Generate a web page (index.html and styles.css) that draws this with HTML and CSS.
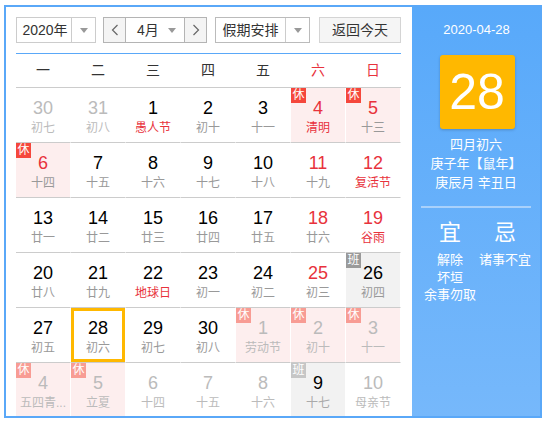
FILE: index.html
```html
<!DOCTYPE html>
<html lang="zh">
<head>
<meta charset="utf-8">
<title>万年历</title>
<link rel="stylesheet" href="styles.css">
</head>
<body>
<div class="cal">
  <div class="main">
    <div class="bar">
      <div class="sel sel-year"><span class="sel-text">2020年</span><span class="sel-arrow"><i class="tri"></i></span></div>
      <div class="month-group">
        <span class="nav"><svg width="8" height="12" viewBox="0 0 8 12"><polyline points="6.5,1 1.5,6 6.5,11" fill="none" stroke="#666" stroke-width="1.2"/></svg></span>
        <span class="month"><span class="month-text">4月</span><i class="tri"></i></span>
        <span class="nav"><svg width="8" height="12" viewBox="0 0 8 12"><polyline points="1.5,1 6.5,6 1.5,11" fill="none" stroke="#666" stroke-width="1.2"/></svg></span>
      </div>
      <div class="sel sel-hol"><span class="sel-text">假期安排</span><span class="sel-arrow"><i class="tri"></i></span></div>
      <div class="btn-today">返回今天</div>
    </div>
    <div class="weeks">
      <span>一</span><span>二</span><span>三</span><span>四</span><span>五</span><span class="red">六</span><span class="red">日</span>
    </div>
    <div class="grid">
      <div class="cell other"><b>30</b><em>初七</em></div>
      <div class="cell other"><b>31</b><em>初八</em></div>
      <div class="cell"><b>1</b><em class="red">愚人节</em></div>
      <div class="cell"><b>2</b><em>初十</em></div>
      <div class="cell"><b>3</b><em>十一</em></div>
      <div class="cell rest"><i class="tag">休</i><b class="red">4</b><em class="red">清明</em></div>
      <div class="cell rest"><i class="tag">休</i><b class="red">5</b><em>十三</em></div>

      <div class="cell rest"><i class="tag">休</i><b class="red">6</b><em>十四</em></div>
      <div class="cell"><b>7</b><em>十五</em></div>
      <div class="cell"><b>8</b><em>十六</em></div>
      <div class="cell"><b>9</b><em>十七</em></div>
      <div class="cell"><b>10</b><em>十八</em></div>
      <div class="cell"><b class="red">11</b><em>十九</em></div>
      <div class="cell"><b class="red">12</b><em class="red">复活节</em></div>

      <div class="cell"><b>13</b><em>廿一</em></div>
      <div class="cell"><b>14</b><em>廿二</em></div>
      <div class="cell"><b>15</b><em>廿三</em></div>
      <div class="cell"><b>16</b><em>廿四</em></div>
      <div class="cell"><b>17</b><em>廿五</em></div>
      <div class="cell"><b class="red">18</b><em>廿六</em></div>
      <div class="cell"><b class="red">19</b><em class="red">谷雨</em></div>

      <div class="cell"><b>20</b><em>廿八</em></div>
      <div class="cell"><b>21</b><em>廿九</em></div>
      <div class="cell"><b>22</b><em class="red">地球日</em></div>
      <div class="cell"><b>23</b><em>初一</em></div>
      <div class="cell"><b>24</b><em>初二</em></div>
      <div class="cell"><b class="red">25</b><em>初三</em></div>
      <div class="cell work"><i class="tag">班</i><b>26</b><em>初四</em></div>

      <div class="cell"><b>27</b><em>初五</em></div>
      <div class="cell today"><b>28</b><em>初六</em></div>
      <div class="cell"><b>29</b><em>初七</em></div>
      <div class="cell"><b>30</b><em>初八</em></div>
      <div class="cell other rest"><i class="tag">休</i><b>1</b><em>劳动节</em></div>
      <div class="cell other rest"><i class="tag">休</i><b>2</b><em>初十</em></div>
      <div class="cell other rest"><i class="tag">休</i><b>3</b><em>十一</em></div>

      <div class="cell other rest"><i class="tag">休</i><b>4</b><em class="short">五四青...</em></div>
      <div class="cell other rest"><i class="tag">休</i><b>5</b><em>立夏</em></div>
      <div class="cell other"><b>6</b><em>十四</em></div>
      <div class="cell other"><b>7</b><em>十五</em></div>
      <div class="cell other"><b>8</b><em>十六</em></div>
      <div class="cell other work"><i class="tag">班</i><b class="dark">9</b><em>十七</em></div>
      <div class="cell other"><b>10</b><em>母亲节</em></div>
    </div>
  </div>
  <div class="side">
    <div class="side-date">2020-04-28</div>
    <div class="big-day">28</div>
    <div class="lunar">
      <div>四月初六</div>
      <div>庚子年【鼠年】</div>
      <div>庚辰月 辛丑日</div>
    </div>
    <div class="divider"></div>
    <div class="yiji">
      <div class="col">
        <div class="yj-title">宜</div>
        <div class="yj-item">解除</div>
        <div class="yj-item">坏垣</div>
        <div class="yj-item">余事勿取</div>
      </div>
      <div class="col">
        <div class="yj-title">忌</div>
        <div class="yj-item">诸事不宜</div>
      </div>
    </div>
  </div>
</div>
</body>
</html>
```
FILE: styles.css
```css
* { box-sizing: border-box; }
html, body { margin: 0; padding: 0; background: #fff; }
body {
  font-family: "Liberation Sans", "Noto Sans CJK SC", sans-serif;
  color: #333;
}
.cal {
  margin: 5px 0 0 4px;
  width: 538px;
  height: 413px;
  border: 2px solid #5aa8f8;
  display: flex;
  overflow: hidden;
}
.main {
  width: 406px;
  padding: 10px 0 0 10px;
  background: #fff;
  overflow: hidden;
}
.bar {
  display: flex;
  height: 26px;
  margin-bottom: 10px;
  font-size: 14px;
}
.sel {
  display: flex;
  height: 26px;
  border: 1px solid #ccc;
  background: #fff;
}
.sel-text {
  flex: 1;
  text-align: center;
  line-height: 24px;
}
.sel-arrow {
  width: 24px;
  border-left: 1px solid #ccc;
  display: flex;
  align-items: center;
  justify-content: center;
}
.tri {
  width: 0; height: 0;
  border-left: 4.5px solid transparent;
  border-right: 4.5px solid transparent;
  border-top: 5px solid #999;
}
.sel-year { width: 80px; }
.sel-year .sel-text { padding-left: 2px; }
.month-group {
  display: flex;
  margin-left: 7px;
  width: 104px;
  height: 26px;
  border: 1px solid #b4b4b4;
}
.nav {
  width: 22px;
  background: #f4f4f4;
  display: flex;
  align-items: center;
  justify-content: center;
}
.nav:first-child { border-right: 1px solid #b4b4b4; }
.nav:last-child { border-left: 1px solid #b4b4b4; }
.month {
  flex: 1;
  display: flex;
  align-items: center;
  padding: 0 8px 0 10px;
  background: #fff;
}
.month-text { flex: 1; line-height: 24px; padding-left: 1px; }
.sel-hol {
  margin-left: 8px;
  width: 95px;
  border-color: #bbb;
}
.sel-hol .sel-arrow { border-left-color: #ccc; }
.btn-today {
  margin-left: 9px;
  width: 82px;
  height: 26px;
  line-height: 24px;
  text-align: center;
  border: 1px solid #d4d4d4;
  background: #f5f5f5;
}
.weeks {
  width: 385px;
  display: grid;
  grid-template-columns: repeat(7, 55px);
  border-top: 1px solid #5aa8f8;
  border-bottom: 1px solid #ccc;
  height: 35px;
  line-height: 33px;
  font-size: 14px;
  text-align: center;
}
.weeks span { padding-right: 1px; }
.red { color: #e8323c; }
.grid {
  width: 385px;
  display: grid;
  grid-template-columns: repeat(7, 55px);
  grid-auto-rows: 55px;
}
.cell {
  position: relative;
  border-bottom: 1px solid #ccc;
  border-right: 1px solid transparent;
  background-clip: padding-box;
  text-align: center;
  padding-top: 9px;
}
.cell b {
  display: block;
  font-weight: normal;
  font-size: 18px;
  line-height: 22px;
  color: #000;
}
.cell em {
  display: block;
  font-style: normal;
  font-size: 12px;
  line-height: 14px;
  margin-top: 2px;
  color: #999;
  white-space: nowrap;
  padding: 0 1px;
}
.cell em.short { letter-spacing: 0; }
.cell b.red, .cell em.red { color: #e8323c; }
.cell.other b, .cell.other em { color: #bbb; }
.cell.other b.dark { color: #000; }
.cell.other.work em { color: #aaa; }
.cell.rest { background-color: #fdeeee; }
.cell.work { background-color: #f2f2f2; }
.tag {
  position: absolute;
  left: 0;
  top: 0;
  width: 15px;
  height: 15px;
  font-style: normal;
  font-size: 12px;
  line-height: 15px;
  color: #fff;
  text-align: center;
  background: #f5473c;
}
.work .tag { background: #9a9a9a; }
.other.rest .tag { background: #f89c94; }
.other.work .tag { background: #c6c6c6; }
.today { box-shadow: inset 0 0 0 3px #ffb800; }

.side {
  width: 128px;
  background: linear-gradient(#58a9fa, #76b8fb);
  color: #fff;
  display: flex;
  flex-direction: column;
  align-items: center;
  padding-top: 15px;
  font-size: 13px;
}
.side-date {
  line-height: 16px;
  font-size: 13px;
  padding-left: 1px;
}
.big-day {
  margin-top: 17px;
  width: 75px;
  height: 74px;
  margin-left: 2px;
  background: #ffb800;
  border-radius: 3px;
  box-shadow: 0 1px 3px rgba(0, 0, 0, 0.2);
  text-align: center;
  line-height: 74px;
  font-size: 50px;
}
.lunar {
  margin-top: 6px;
  text-align: center;
  line-height: 19px;
}
.divider {
  margin-top: 14px;
  width: 110px;
  height: 2px;
  background: #a9d1fb;
}
.yiji {
  display: flex;
  margin-top: 12px;
  padding-left: 3px;
}
.col {
  width: 55px;
  display: flex;
  flex-direction: column;
  align-items: center;
}
.yj-title {
  font-size: 22px;
  line-height: 26px;
  margin-bottom: 5px;
}
.yj-item {
  line-height: 17.5px;
  white-space: nowrap;
}
```
